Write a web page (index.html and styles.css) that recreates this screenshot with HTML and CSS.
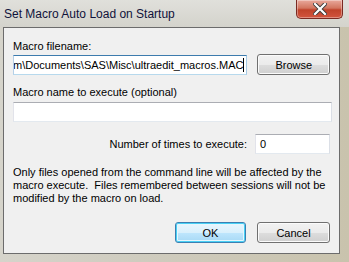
FILE: index.html
```html
<!DOCTYPE html>
<html lang="en">
<head>
  <meta charset="UTF-8">
  <title>Set Macro Auto Load on Startup</title>
  <link rel="stylesheet" href="styles.css">
</head>
<body>
  <div class="window">
    <div class="titlebar">
      <span class="title">Set Macro Auto Load on Startup</span>
      <button class="close-btn" title="Close">
        <svg viewBox="0 0 14 12" width="14" height="12">
          <path d="M2,1 L12,11 M12,1 L2,11" stroke="#3a3a3a" stroke-width="4" stroke-linecap="square"/>
          <path d="M2,1 L12,11 M12,1 L2,11" stroke="#ffffff" stroke-width="2.2" stroke-linecap="square"/>
        </svg>
      </button>
    </div>
    <div class="client">
      <div class="label">Macro filename:</div>
      <div class="row">
        <div class="textbox focused path">
          <span>C:\Users\William\Documents\SAS\Misc\ultraedit_macros.MAC</span><span class="caret"></span>
        </div>
        <button class="btn">Browse</button>
      </div>
      <div class="label second">Macro name to execute (optional)</div>
      <div class="textbox wide"></div>
      <div class="row count-row">
        <span class="count-label">Number of times to execute:</span>
        <div class="textbox count">0</div>
      </div>
      <p class="note">Only files opened from the command line will be affected by the macro execute.&nbsp; Files remembered between sessions will not be modified by the macro on load.</p>
      <div class="row actions">
        <button class="btn default">OK</button>
        <button class="btn">Cancel</button>
      </div>
    </div>
  </div>
</body>
</html>
```

FILE: styles.css
```css
html, body {
  margin: 0;
  padding: 0;
}
body {
  width: 349px;
  height: 262px;
  overflow: hidden;
  font-family: 'Liberation Sans', Arial, sans-serif;
  font-size: 11px;
  color: #000;
  background: linear-gradient(90deg, #d6d4cb, #cfccbf 40%, #c9c3ad);
}
.window {
  display: flex;
  flex-direction: column;
  height: 262px;
}
.titlebar {
  height: 27px;
  display: flex;
  justify-content: space-between;
  align-items: flex-start;
  background: linear-gradient(180deg, #e0e0db, #d4d3cc);
}
.title {
  padding: 7px 0 0 4px;
  color: #10123a;
  font-size: 12px;
}
.close-btn {
  width: 47px;
  height: 19px;
  margin-right: 6px;
  border: 1px solid #7a2a22;
  border-top: none;
  border-radius: 0 0 5px 5px;
  background: linear-gradient(180deg, #e9a99c, #d2755f 45%, #c0422a 55%, #d2553e);
  box-shadow: inset 0 0 0 1px rgba(255, 255, 255, 0.35);
  display: flex;
  align-items: center;
  justify-content: center;
  padding: 0;
}
.client {
  width: 337px;
  height: 227px;
  margin-left: 3px;
  border: 1px solid #6c6c6c;
  background: #f0f0f0;
  padding: 0 9px;
  box-sizing: border-box;
  display: flex;
  flex-direction: column;
}
.label {
  margin-top: 11px;
  height: 15px;
  line-height: 15px;
}
.label.second {
  margin-top: 10px;
}
.row {
  display: flex;
  align-items: center;
  gap: 10px;
}
.textbox {
  height: 20px;
  box-sizing: border-box;
  background: #fff;
  border: 1px solid #abadb3;
  border-color: #abadb3 #dbdfe6 #e3e9ef #e2e3ea;
  line-height: 18px;
  padding: 0 4px;
}
.textbox.focused {
  border-color: #3d7bad #a4c9e3 #b7d9ed #b5cfe7;
}
.path {
  width: 236px;
  margin-top: 1px;
  display: flex;
  justify-content: flex-end;
  white-space: nowrap;
  overflow: hidden;
  padding: 0 2px 0 0;
}
.path span {
  flex-shrink: 0;
}
.caret {
  width: 1px;
  height: 14px;
  margin-top: 2px;
  background: #000;
}
.wide {
  width: 319px;
  margin-top: 2px;
}
.count-row {
  justify-content: flex-end;
  margin-top: 12px;
  gap: 8px;
}
.count {
  width: 75px;
}
.note {
  margin: 12px 0 0;
  line-height: 13px;
}
.actions {
  justify-content: flex-end;
  margin-top: 17px;
  gap: 11px;
}
.btn {
  width: 73px;
  height: 21px;
  padding: 0;
  font-family: inherit;
  font-size: 11px;
  color: #000;
  border: 1px solid #707070;
  border-radius: 3px;
  background: linear-gradient(180deg, #f2f2f2, #ebebeb 50%, #dddddd 51%, #cfcfcf);
  box-shadow: inset 0 0 0 1px #fbfbfb;
}
.btn.default {
  width: 71px;
  border-color: #3c7fb1;
  background: linear-gradient(180deg, #eaf6fd, #d9f0fc 50%, #bee6fd 51%, #a7d9f5);
  box-shadow: inset 0 0 0 1px #48d0f5, inset 0 0 0 2px #e6f6fd;
}
```
